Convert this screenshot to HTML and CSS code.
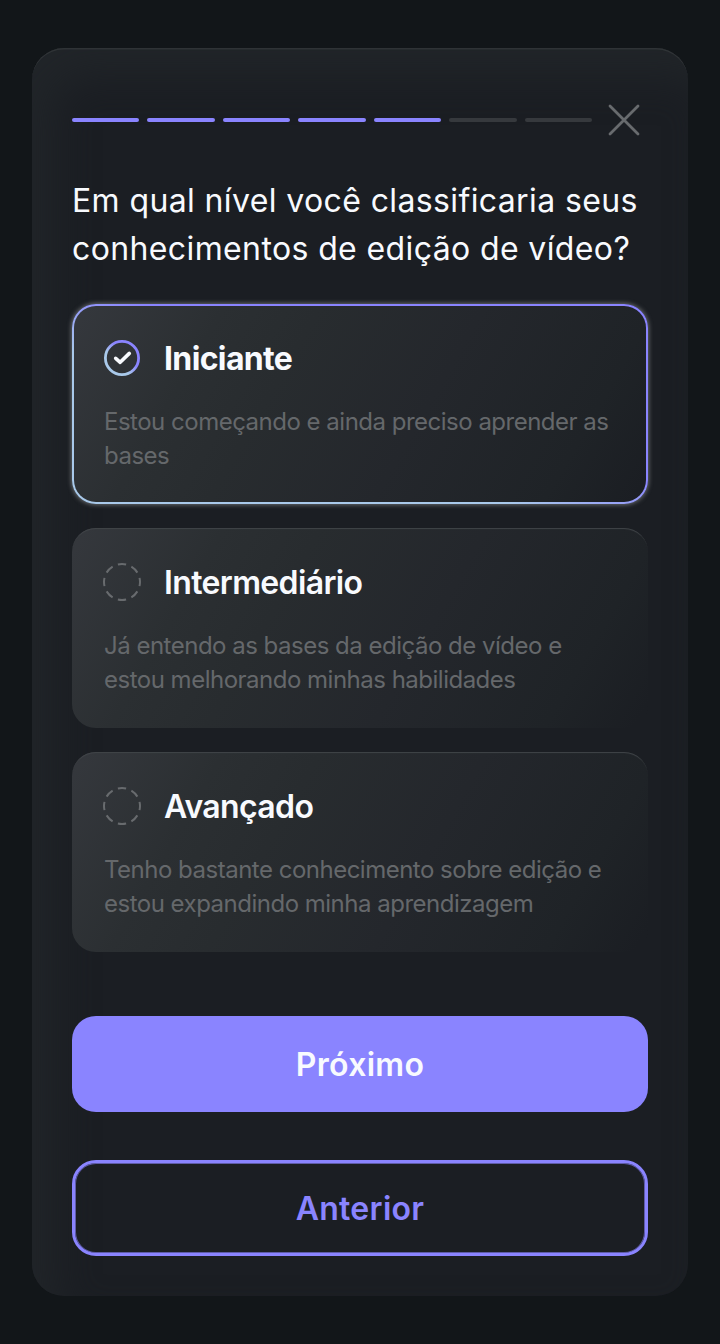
FILE: index.html
```html
<!DOCTYPE html>
<html lang="pt-BR">
<head>
  <meta charset="UTF-8" />
  <meta name="viewport" content="width=device-width, initial-scale=1.0" />
  <title>Nível de conhecimento</title>
  <link rel="stylesheet" href="styles.css">
</head>
<body>
  <main class="card">
    <header>
      <div class="steps">
        <span class="step done"></span>
        <span class="step done"></span>
        <span class="step done"></span>
        <span class="step done"></span>
        <span class="step done"></span>
        <span class="step"></span>
        <span class="step"></span>
      </div>
      <button class="close" aria-label="Fechar">
        <svg width="32" height="32" viewBox="0 0 32 32">
          <path d="M2 2L30 30M30 2L2 30" />
        </svg>
      </button>
    </header>

    <h1>Em qual nível você classificaria seus conhecimentos de edição de vídeo?</h1>

    <div class="options">
      <div class="option selected">
        <div class="option-head">
          <svg class="radio" width="40" height="40" viewBox="0 0 40 40">
            <defs>
              <linearGradient id="ring" x1="0" y1="1" x2="1" y2="0">
                <stop offset="0.36" stop-color="#a9c9ea" />
                <stop offset="0.6" stop-color="#8a84ff" />
              </linearGradient>
            </defs>
            <circle cx="20" cy="20" r="16.6" fill="none" stroke="url(#ring)" stroke-width="2.8" />
            <path class="check" d="M13.7 20.3L18.2 24.3L27.3 15.4" />
          </svg>
          <h2>Iniciante</h2>
        </div>
        <p>Estou começando e ainda preciso aprender as bases</p>
      </div>

      <div class="option">
        <div class="option-head">
          <svg class="radio" width="40" height="40" viewBox="0 0 40 40">
            <circle class="dashes" cx="20" cy="20" r="18" pathLength="80" />
          </svg>
          <h2>Intermediário</h2>
        </div>
        <p>Já entendo as bases da edição de vídeo e estou melhorando minhas habilidades</p>
      </div>

      <div class="option">
        <div class="option-head">
          <svg class="radio" width="40" height="40" viewBox="0 0 40 40">
            <circle class="dashes" cx="20" cy="20" r="18" pathLength="80" />
          </svg>
          <h2>Avançado</h2>
        </div>
        <p>Tenho bastante conhecimento sobre edição e estou expandindo minha aprendizagem</p>
      </div>
    </div>

    <div class="actions">
      <button class="btn primary">Próximo</button>
      <button class="btn secondary">Anterior</button>
    </div>
  </main>
</body>
</html>
```
FILE: styles.css
```css
* {
  box-sizing: border-box;
}

body {
  margin: 0;
  padding: 48px 32px;
  min-height: 100vh;
  font-family: Inter, sans-serif;
  background-color: #121619;
  color: #f8fafe;
}

h1, h2, p {
  margin: 0;
}

button {
  font-family: inherit;
  cursor: pointer;
}

.card {
  height: 1248px;
  padding: 48px 40px 40px;
  border-radius: 32px;
  background-color: #1b1e23;
  box-shadow: inset 0 2px 0 -0.5px #2f3336, inset 22px 28px 40px #212529;
}

header {
  display: flex;
  align-items: center;
  height: 48px;
}

.steps {
  display: flex;
  gap: 8px;
  width: 520px;
}

.step {
  flex: 1;
  height: 4px;
  border-radius: 2px;
  background-color: #36393d;
}

.step.done {
  background-color: #8a84ff;
}

.close {
  display: flex;
  margin-left: 16px;
  padding: 0;
  border: none;
  background: none;
}

.close path {
  fill: none;
  stroke: #686b6e;
  stroke-width: 2.8;
  stroke-linecap: round;
}

h1 {
  margin: 33px 0 31px;
  font-size: 32px;
  line-height: 48px;
  font-weight: 400;
  letter-spacing: 0.38px;
}

.options {
  display: flex;
  flex-direction: column;
  gap: 24px;
}

.option {
  height: 200px;
  padding: 32px;
  border-radius: 24px;
  background: linear-gradient(120deg, #35383d 0%, #2b2f32 22%, #282c2f 36%, #24272c 60%, #1f2327 85%, #1b1e23 98%);
  box-shadow: inset 0 2px 1px -1px #414549;
}

.option.selected {
  padding: 30px;
  border: 2px solid transparent;
  background:
    linear-gradient(120deg, #35383d 0%, #2b2f32 22%, #282c2f 36%, #24272c 60%, #1f2327 85%, #1b1e23 98%) padding-box,
    linear-gradient(to top right, #a9c9ea 38%, #8a84ff 56%) border-box;
  box-shadow: 0 0 4px 1px #65686b;
}

.option-head {
  display: flex;
  align-items: center;
  gap: 22px;
  height: 44px;
  margin: 0 0 25px -2px;
}

.option h2 {
  padding-top: 2px;
  font-size: 32px;
  line-height: 44px;
  font-weight: 600;
  letter-spacing: -0.64px;
}

.option.selected h2 {
  font-weight: 700;
}

.option p {
  font-size: 24px;
  line-height: 34px;
  font-weight: 400;
  letter-spacing: -0.5px;
  color: #65686b;
}

.check {
  fill: none;
  stroke: #f8fafe;
  stroke-width: 3.6;
  stroke-linecap: round;
  stroke-linejoin: round;
}

/* eight dashes, one centred on each compass point */
.dashes {
  fill: none;
  stroke: #686b6e;
  stroke-width: 2;
  stroke-dasharray: 6 4;
  stroke-dashoffset: 3;
}

.actions {
  display: flex;
  flex-direction: column;
  gap: 48px;
  margin-top: 64px;
}

.btn {
  height: 96px;
  padding-top: 2px;
  border: none;
  border-radius: 24px;
  font-size: 32px;
  font-weight: 600;
  letter-spacing: 0.3px;
}

.primary {
  background-color: #8a84ff;
  color: #f8fafe;
}

.secondary {
  border: 3px solid #8a84ff;
  box-shadow: inset 0 0 0 1px #5f5ca8;
  background-color: transparent;
  color: #8a84ff;
}
```
